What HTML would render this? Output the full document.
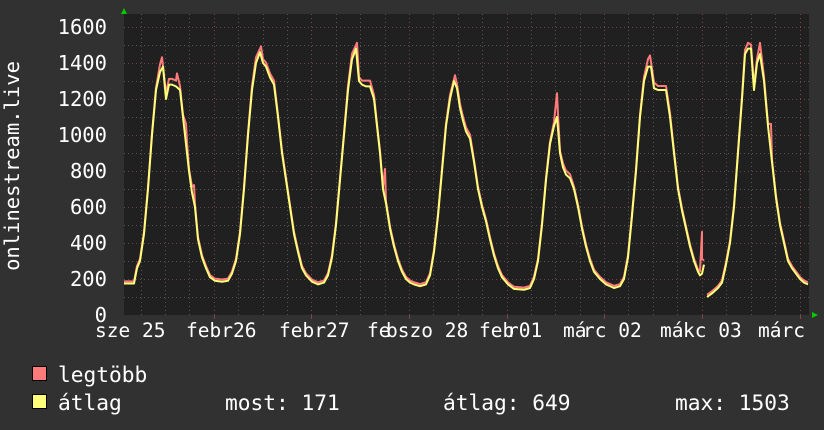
<!DOCTYPE html>
<html><head><meta charset="utf-8"><style>
html,body{margin:0;padding:0;background:#313131;}
body{width:824px;height:430px;position:relative;overflow:hidden;font-family:"DejaVu Sans Mono","Liberation Mono",monospace;color:#fff;}
.t{position:absolute;font-size:19.5px;white-space:pre;line-height:1;}
.y{font-size:20.5px;}
.l{font-size:21.2px;}
</style></head><body>
<svg width="824" height="430" style="position:absolute;left:0;top:0">
<rect x="124" y="14" width="685" height="301" fill="#202020"/>
<g stroke-dasharray="1,3" stroke-width="1">
<g stroke="#555">
<line x1="124" x2="809" y1="297.5" y2="297.5"/><line x1="124" x2="809" y1="261.5" y2="261.5"/><line x1="124" x2="809" y1="225.5" y2="225.5"/><line x1="124" x2="809" y1="189.5" y2="189.5"/><line x1="124" x2="809" y1="153.5" y2="153.5"/><line x1="124" x2="809" y1="117.5" y2="117.5"/><line x1="124" x2="809" y1="81.5" y2="81.5"/><line x1="124" x2="809" y1="45.5" y2="45.5"/>
</g>
<g stroke="#6e4545">
<line x1="124" x2="809" y1="279.5" y2="279.5"/><line x1="124" x2="809" y1="243.5" y2="243.5"/><line x1="124" x2="809" y1="207.5" y2="207.5"/><line x1="124" x2="809" y1="171.5" y2="171.5"/><line x1="124" x2="809" y1="135.5" y2="135.5"/><line x1="124" x2="809" y1="99.5" y2="99.5"/><line x1="124" x2="809" y1="63.5" y2="63.5"/><line x1="124" x2="809" y1="27.5" y2="27.5"/>
</g>
</g>
<g stroke="#555" stroke-dasharray="1,3">
<line x1="141.5" x2="141.5" y1="14" y2="315"/><line x1="165.5" x2="165.5" y1="14" y2="315"/><line x1="189.5" x2="189.5" y1="14" y2="315"/>
<line x1="238.5" x2="238.5" y1="14" y2="315"/><line x1="263.5" x2="263.5" y1="14" y2="315"/><line x1="287.5" x2="287.5" y1="14" y2="315"/>
<line x1="336.5" x2="336.5" y1="14" y2="315"/><line x1="360.5" x2="360.5" y1="14" y2="315"/><line x1="385.5" x2="385.5" y1="14" y2="315"/>
<line x1="433.5" x2="433.5" y1="14" y2="315"/><line x1="458.5" x2="458.5" y1="14" y2="315"/><line x1="482.5" x2="482.5" y1="14" y2="315"/>
<line x1="531.5" x2="531.5" y1="14" y2="315"/><line x1="555.5" x2="555.5" y1="14" y2="315"/><line x1="580.5" x2="580.5" y1="14" y2="315"/>
<line x1="628.5" x2="628.5" y1="14" y2="315"/><line x1="653.5" x2="653.5" y1="14" y2="315"/><line x1="677.5" x2="677.5" y1="14" y2="315"/>
<line x1="726.5" x2="726.5" y1="14" y2="315"/><line x1="751.5" x2="751.5" y1="14" y2="315"/><line x1="775.5" x2="775.5" y1="14" y2="315"/>
</g>
<g stroke="#7a4545" stroke-dasharray="1,3">
<line x1="214.5" x2="214.5" y1="14" y2="315"/><line x1="311.5" x2="311.5" y1="14" y2="315"/><line x1="409.5" x2="409.5" y1="14" y2="315"/><line x1="507.5" x2="507.5" y1="14" y2="315"/><line x1="604.5" x2="604.5" y1="14" y2="315"/><line x1="702.5" x2="702.5" y1="14" y2="315"/><line x1="800.5" x2="800.5" y1="14" y2="315"/>
</g>
<g stroke="#7a4545"><line x1="214.5" x2="214.5" y1="315" y2="319"/><line x1="311.5" x2="311.5" y1="315" y2="319"/><line x1="409.5" x2="409.5" y1="315" y2="319"/><line x1="507.5" x2="507.5" y1="315" y2="319"/><line x1="604.5" x2="604.5" y1="315" y2="319"/><line x1="702.5" x2="702.5" y1="315" y2="319"/><line x1="800.5" x2="800.5" y1="315" y2="319"/></g>
<polygon points="121,14 127,14 124,8" fill="#0c0"/>
<polygon points="812,312 812,318 818,315" fill="#0c0"/>
<g transform="translate(0,315) scale(1,-0.18)" fill="none" stroke-linejoin="round">
<g transform="translate(0,12)" stroke="#ff7b7b" stroke-width="2">
<polyline vector-effect="non-scaling-stroke" points="124,175 134,175 137,260 140,300 144,450 148,700 152,1000 156,1250 160,1380 162,1420 166,1220 169,1300 172,1300 176,1290 177,1330 180,1260 183,1100 186,1050 187,950 189,800 192,700 194,710 195,600 198,420 202,320 206,260 210,210 215,190 222,185 228,190 232,230 236,300 240,450 244,700 248,1000 252,1260 256,1420 261,1480 263,1410 266,1390 270,1330 274,1290 278,1100 282,900 286,750 290,600 294,450 298,350 302,260 306,220 312,185 318,170 324,180 328,220 332,320 336,500 340,750 344,1000 348,1260 352,1440 357,1500 359,1310 362,1290 366,1290 370,1290 374,1210 377,1050 380,900 383,700 385,800 386,620 390,480 394,380 398,300 402,240 406,200 410,180 414,170 420,160 426,170 430,220 434,350 438,550 442,800 446,1050 450,1210 455,1320 457,1270 460,1160 463,1090 466,1030 470,990 474,850 478,700 482,600 486,520 490,420 494,330 498,260 502,210 508,170 514,145 524,140 530,150 534,200 538,300 542,500 546,750 550,950 554,1060 557,1220 558,1100 560,900 563,830 566,790 570,770 574,700 578,600 582,480 586,380 590,300 594,240 600,200 606,170 614,150 620,160 624,200 628,320 632,550 636,800 640,1100 644,1310 648,1410 650,1430 654,1280 658,1260 662,1260 666,1260 670,1110 674,900 678,700 682,580 686,480 690,380 694,300 698,240 700,230 702,450 702,300 704,290"/>
<polyline vector-effect="non-scaling-stroke" points="707,100 712,120 718,150 722,180 726,280 730,400 734,600 738,900 742,1200 745,1460 748,1500 751,1490 754,1260 757,1410 760,1500 764,1310 768,1050 771,1050 772,850 776,650 780,500 784,400 788,300 792,260 796,230 800,200 804,180 808,170"/>
</g>
<g stroke="#ffff7a" stroke-width="2">
<polyline vector-effect="non-scaling-stroke" points="124,175 134,175 137,260 140,300 144,450 148,700 152,1000 156,1250 160,1350 163,1380 166,1200 169,1280 172,1280 176,1270 180,1250 183,1100 186,950 189,800 192,680 195,600 198,420 202,320 206,260 210,210 215,190 222,185 228,190 232,230 236,300 240,450 244,700 248,1000 252,1250 256,1400 260,1460 263,1400 266,1380 270,1320 274,1280 278,1100 282,900 286,750 290,600 294,450 298,350 302,260 306,220 312,185 318,170 324,180 328,220 332,320 336,500 340,750 344,1000 348,1250 352,1420 356,1480 359,1300 362,1280 366,1270 370,1270 374,1200 377,1050 380,900 383,700 386,620 390,480 394,380 398,300 402,240 406,200 410,180 414,170 420,160 426,170 430,220 434,350 438,550 442,800 446,1050 450,1200 454,1300 457,1260 460,1150 463,1080 466,1020 470,980 474,850 478,700 482,600 486,520 490,420 494,330 498,260 502,210 508,170 514,145 524,140 530,150 534,200 538,300 542,500 546,750 550,950 554,1050 557,1100 560,900 563,820 566,780 570,760 574,700 578,600 582,480 586,380 590,300 594,240 600,200 606,170 614,150 620,160 624,200 628,320 632,550 636,800 640,1100 644,1300 648,1380 651,1380 654,1260 658,1250 662,1250 666,1250 670,1100 674,900 678,700 682,580 686,480 690,380 694,300 698,240 700,220 702,230 704,280"/>
<polyline vector-effect="non-scaling-stroke" points="707,100 712,120 718,150 722,180 726,280 730,400 734,600 738,900 742,1200 745,1450 748,1480 751,1480 754,1250 757,1400 760,1450 764,1300 768,1050 772,850 776,650 780,500 784,400 788,300 792,260 796,230 800,200 804,180 808,170"/>
</g>
</g>
<rect x="32.5" y="366.5" width="14" height="14" fill="#ff7b7b" stroke="#000"/>
<rect x="32.5" y="394.5" width="14" height="14" fill="#ffff7a" stroke="#000"/>
<text x="19" y="166" transform="rotate(-90 19 166)" text-anchor="middle" fill="#fff" font-family="DejaVu Sans Mono, monospace" font-size="20.5">onlinestream.live</text>
</svg>
<div class="t y" style="right:717px;top:17px">1600</div>
<div class="t y" style="right:717px;top:53px">1400</div>
<div class="t y" style="right:717px;top:89px">1200</div>
<div class="t y" style="right:717px;top:125px">1000</div>
<div class="t y" style="right:717px;top:161px">800</div>
<div class="t y" style="right:717px;top:197px">600</div>
<div class="t y" style="right:717px;top:233px">400</div>
<div class="t y" style="right:717px;top:269px">200</div>
<div class="t y" style="right:717px;top:305px">0</div>
<div class="t" style="left:95px;top:321px">sze 25</div>
<div class="t" style="left:186px;top:321px">febr26</div>
<div class="t" style="left:279px;top:321px">febr27</div>
<div class="t" style="left:367px;top:321px">fe</div>
<div class="t" style="left:386px;top:321px">bszo 28</div>
<div class="t" style="left:479px;top:321px">feb</div>
<div class="t" style="left:507px;top:321px">r01</div>
<div class="t" style="left:563px;top:321px">má</div>
<div class="t" style="left:583px;top:321px">rc 02</div>
<div class="t" style="left:660px;top:321px">má</div>
<div class="t" style="left:683px;top:321px">kc 03</div>
<div class="t" style="left:758px;top:321px">márc</div>
<div class="t l" style="left:58px;top:364px">legtöbb</div>
<div class="t l" style="left:58px;top:392px">átlag</div>
<div class="t l" style="left:225px;top:392px">most: 171</div>
<div class="t l" style="left:443px;top:392px">átlag: 649</div>
<div class="t l" style="left:675px;top:392px">max: 1503</div>
</body></html>
